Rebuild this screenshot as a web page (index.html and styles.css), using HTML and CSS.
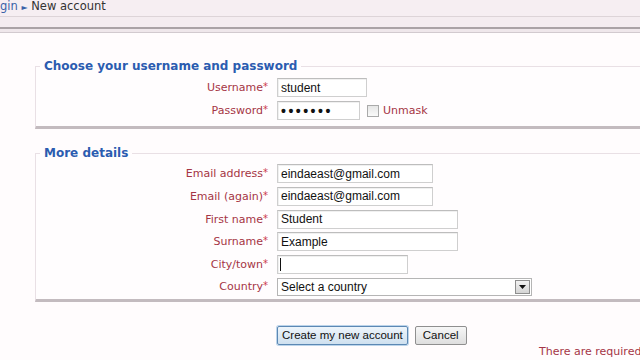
FILE: index.html
```html
<!DOCTYPE html>
<html lang="en">
<head>
<meta charset="utf-8">
<title>New account</title>
<link rel="stylesheet" href="styles.css">
</head>
<body>
<header class="crumbbar">
  <nav class="crumbs"><a class="crumb-link" href="#">gin</a> <span class="crumb-sep">&#9658;</span> <span class="crumb-current">New account</span></nav>
</header>
<div class="bands">
  <div class="band band-light"></div>
  <div class="band band-dark"></div>
  <div class="band band-pale"></div>
  <div class="band band-mid"></div>
</div>
<main class="page">
  <form class="signup">
    <fieldset class="group group-login">
      <legend class="group-title">Choose your username and password</legend>
      <div class="form-grid">
        <label class="flabel">Username<span class="req">*</span></label>
        <input class="field w-user" type="text" value="student">
        <label class="flabel">Password<span class="req">*</span></label>
        <div class="pw-row">
          <input class="field w-pass pw" type="password" value="student">
          <span class="check"></span>
          <span class="unmask">Unmask</span>
        </div>
      </div>
    </fieldset>
    <fieldset class="group group-details">
      <legend class="group-title">More details</legend>
      <div class="form-grid">
        <label class="flabel">Email address<span class="req">*</span></label>
        <input class="field w-email" type="text" value="eindaeast@gmail.com">
        <label class="flabel">Email (again)<span class="req">*</span></label>
        <input class="field w-email" type="text" value="eindaeast@gmail.com">
        <label class="flabel">First name<span class="req">*</span></label>
        <input class="field w-name" type="text" value="Student">
        <label class="flabel">Surname<span class="req">*</span></label>
        <input class="field w-name" type="text" value="Example">
        <label class="flabel">City/town<span class="req">*</span></label>
        <div class="caret-wrap">
          <input class="field w-city" type="text" value="">
          <span class="caret"></span>
        </div>
        <label class="flabel">Country<span class="req">*</span></label>
        <div class="select w-country">
          <span class="select-text">Select a country</span>
          <span class="select-btn">
            <svg width="7" height="4" viewBox="0 0 7 4"><path d="M0 0H7L3.5 4Z" fill="#111"/></svg>
          </span>
        </div>
      </div>
    </fieldset>
    <div class="actions">
      <button type="button" class="btn btn-primary">Create my new account</button>
      <button type="button" class="btn">Cancel</button>
    </div>
    <p class="req-note">There are required</p>
  </form>
</main>
</body>
</html>
```

FILE: styles.css
```css
html, body {
  margin: 0;
  padding: 0;
  overflow: hidden;
}
body {
  background: #fffcfd;
  font-family: "DejaVu Sans", Verdana, sans-serif;
  font-size: 11px;
  color: #222;
  width: 640px;
  height: 360px;
}
.crumbbar {
  background: #f6eef2;
  height: 16px;
  border-bottom: 1px solid #ddd4d8;
}
.crumbs {
  line-height: 12px;
  font-size: 11.5px;
  white-space: nowrap;
}
.crumb-link {
  color: #3a62a8;
  text-decoration: none;
}
.crumb-sep {
  color: #3a62a8;
  font-size: 8px;
}
.crumb-current {
  color: #333;
}
.band-light { height: 10px; background: #f4ecf0; }
.band-dark { height: 2px; background: #aaa2a6; }
.band-pale { height: 3px; background: #efe7eb; }
.band-mid { height: 1px; background: #d2cacf; }

.page {
  display: block;
}
.signup {
  margin: 0;
}
.group {
  margin: 26px -20px 0 35px;
  padding: 4px 0 6px 0;
  border: 1px solid #e9e0e5;
  border-bottom: 3px solid #c3bbbf;
  background: #fffdfe;
  min-width: 0;
}
.group-details {
  margin-top: 17px;
  padding-top: 3px;
  padding-bottom: 3px;
}
.group-details .form-grid {
  row-gap: 3.8px;
}
.group-title {
  margin-left: 4px;
  padding: 0 4px;
  font-weight: bold;
  font-size: 12px;
  line-height: 15px;
  color: #2b5cb0;
}
.form-grid {
  display: grid;
  grid-template-columns: 232px auto;
  column-gap: 9px;
  row-gap: 4px;
  align-items: center;
  justify-items: start;
}
.flabel {
  justify-self: end;
  color: #a53545;
  font-size: 11px;
  line-height: 13px;
  white-space: nowrap;
}
.req {
  color: #cc3a4c;
  font-size: 10px;
  vertical-align: top;
  position: relative;
  top: -1px;
}
.field {
  box-sizing: border-box;
  height: 19px;
  margin: 0;
  padding: 0 3px;
  border: 1px solid #cfcfcf;
  border-top-color: #bdbdbd;
  background: #fff;
  font-family: "Liberation Sans", Arial, sans-serif;
  font-size: 12px;
  color: #111;
  outline: none;
  box-shadow: inset 1px 1px 0 #f0f0f0;
}
.w-user { width: 90px; }
.w-pass { width: 83px; }
.w-email { width: 156px; }
.w-name { width: 181px; }
.w-city { width: 131px; }
.w-country { width: 255px; }
.pw {
  letter-spacing: 2.5px;
  font-size: 14px;
  font-weight: bold;
}
.pw-row {
  display: flex;
  align-items: center;
}
.check {
  box-sizing: border-box;
  width: 12px;
  height: 12px;
  margin-left: 7px;
  border: 1px solid #aaa;
  background: linear-gradient(#e6e6e6, #fafafa);
}
.unmask {
  margin-left: 4px;
  color: #a53545;
  font-size: 11px;
}
.caret-wrap {
  position: relative;
  display: flex;
}
.caret {
  position: absolute;
  left: 3px;
  top: 3px;
  width: 1px;
  height: 13px;
  background: #111;
}
.select {
  box-sizing: border-box;
  height: 18px;
  display: flex;
  align-items: center;
  justify-content: space-between;
  border: 1px solid #b5b5b5;
  background: #fff;
  font-family: "Liberation Sans", Arial, sans-serif;
  font-size: 12px;
  color: #111;
  padding-left: 3px;
}
.select-btn {
  box-sizing: border-box;
  width: 15px;
  height: 14px;
  margin-right: 1px;
  border: 1px solid #8e8e8e;
  background: linear-gradient(#f2f2f2, #d4d4d4);
  display: flex;
  align-items: center;
  justify-content: center;
}
.actions {
  display: flex;
  gap: 7px;
  padding-left: 277px;
  margin-top: 24px;
}
.btn {
  box-sizing: border-box;
  height: 19px;
  margin: 0;
  padding: 0 7px;
  border: 1px solid #8f8f8f;
  border-radius: 2px;
  background: linear-gradient(#f7f7f7, #dedede);
  font-family: "Liberation Sans", Arial, sans-serif;
  font-size: 11.5px;
  color: #111;
  white-space: nowrap;
}
.btn-primary {
  padding: 0 4px;
  border-color: #5c88b4;
  background: linear-gradient(#eef5fb, #cfe0ef);
  box-shadow: 0 0 0 1px #bcd4ea;
}
.req-note {
  margin: 1px 0 0 0;
  padding-left: 539px;
  white-space: nowrap;
  color: #a53545;
  font-size: 11px;
  line-height: 12px;
}
```
